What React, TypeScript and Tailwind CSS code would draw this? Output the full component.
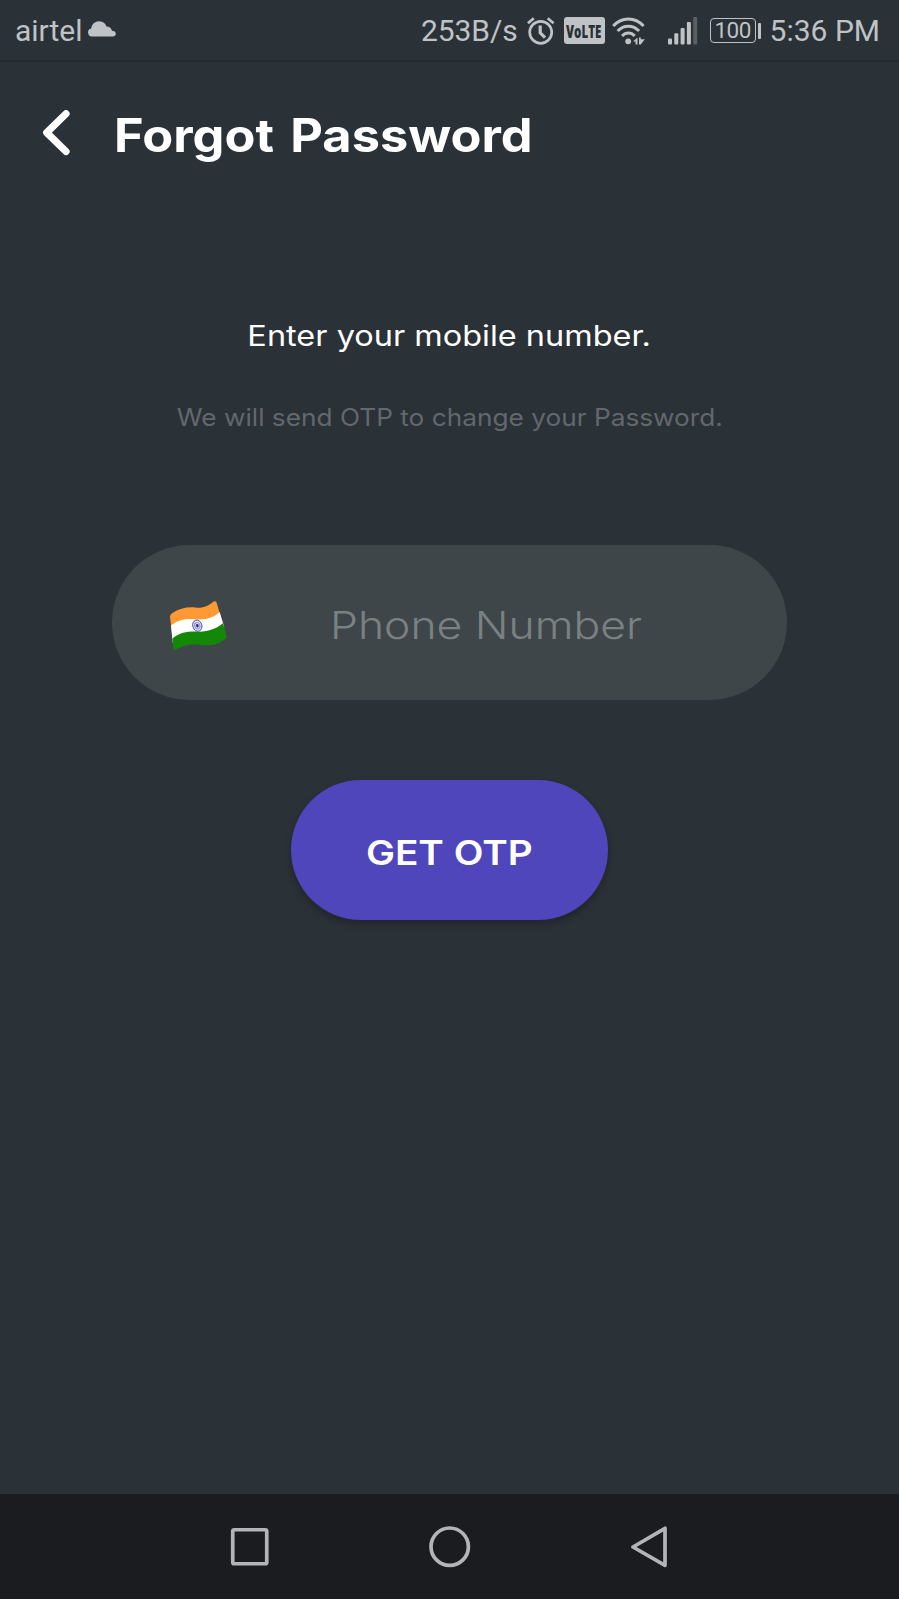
function CloudIcon() {
  return (
    <svg className="mb-[3px] h-4 w-7" viewBox="0 0 28 16" fill="#bfc3c6">
      <path d="M3.800 15.500A4 4 0 0 1 3.200 7.600C3.800 3.200 7 .3 11.200.3c3.700 0 6.300 2.100 7.300 5.300 3.100.1 5 1.700 5.400 4.100 2.500 0 3.900 1.200 3.900 3 0 1.700-1.300 2.800-3.100 2.800z" />
    </svg>
  );
}

function AlarmIcon() {
  return (
    <svg className="h-7 w-7" viewBox="0 0 28 28" fill="none" stroke="#bfc3c6" strokeWidth="2.700">
      <circle cx="13.700" cy="15.300" r="11" />
      <path d="M.9 6.200 6.800 1.200M26.600 6.200 20.700 1.200" />
      <path d="M13.200 8.500v7.300l4.800 4.800" strokeWidth="3.200" />
    </svg>
  );
}

function VolteBadge() {
  return (
    <div className="flex h-[27px] w-[41px] items-center justify-center rounded-[3px] bg-[#bfc3c6]">
      <span className="-mx-3 block scale-x-[0.66] font-['Open_Sans',sans-serif] text-[17.500px] leading-[26px] font-extrabold text-[#2a3136]">
        VoLTE
      </span>
    </div>
  );
}

function WifiIcon() {
  return (
    <svg className="h-7 w-[34px]" viewBox="0 0 34 28" fill="none" stroke="#bfc3c6" strokeWidth="3">
      <path d="M1.200 9C10-.3 22.800-.3 31.600 9" />
      <path d="M5.600 14c6.200-6.500 15.300-6.500 21.500 0" />
      <path d="M10.100 19c3.700-3.900 8.900-3.900 12.600 0" />
      <circle cx="16.200" cy="24.300" r="2.900" fill="#bfc3c6" stroke="none" />
      <path d="M21 24.500 25.500 20.500v7h-2v-3zM27 20.500h1.800v1.800h4L28.800 27.500H27z" fill="#bfc3c6" stroke="none" />
    </svg>
  );
}

function SignalIcon() {
  return (
    <svg className="h-7 w-[30px]" viewBox="0 0 30 28" fill="#bfc3c6">
      <rect x="0" y="21.500" width="4" height="6" rx="1" />
      <rect x="6.300" y="16.300" width="4" height="11.200" rx="1" />
      <rect x="12.600" y="11" width="4" height="16.500" rx="1" />
      <rect x="18.900" y="5" width="4" height="22.500" rx="1" />
      <rect x="25.200" y="0" width="4" height="27.500" rx="1" fill="#596063" />
    </svg>
  );
}

function Battery() {
  return (
    <div className="flex items-center gap-[2px]">
      <div className="flex h-[25px] w-[46px] items-center justify-center rounded-[4px] border-[1.5px] border-[#bfc3c6] pb-[2px] text-[22.500px] leading-[22px] tracking-[-0.5px]">
        100
      </div>
      <div className="h-4 w-[3px] rounded-[1px] bg-[#bfc3c6]" />
    </div>
  );
}

function StatusBar() {
  return (
    <header className="flex h-[62px] items-center justify-between border-b-2 border-[#242a2f] pr-[19px] pl-[15px] pt-[1px] font-['Roboto',sans-serif] text-[30px] leading-[60px] text-[#bfc3c6]">
      <div className="flex items-center gap-[5px]">
        <span>airtel</span>
        <CloudIcon />
      </div>
      <div className="flex items-center">
        <span className="mr-[9px] tracking-[-0.1px]">253B/s</span>
        <AlarmIcon />
        <span className="ml-[9px] flex"><VolteBadge /></span>
        <span className="ml-[7px] flex"><WifiIcon /></span>
        <span className="ml-[22px] flex"><SignalIcon /></span>
        <span className="ml-[12px] flex"><Battery /></span>
        <span className="ml-[9px]">5:36 PM</span>
      </div>
    </header>
  );
}

function IndiaFlag() {
  return (
    <svg className="mt-[5px] h-[70px] w-20" viewBox="0 0 240 210">
      <path d="M33 80Q33 74 39 70C62 54 88 50 112 53C134 55 150 46 163 35Q170 31 173 38L186 84L39 130Z" fill="#ff9933" />
      <path d="M36 106C62 86 88 85 112 88C144 90 164 82 182 66L196 112L41 158Z" fill="#fff" />
      <path d="M40 146C64 125 92 124 116 125C148 126 172 116 192 100L203 138Q204 143 200 146C180 163 154 168 128 165C98 161 72 166 52 178Q44 182 43 175Z" fill="#138808" />
      <g fill="none" stroke="#2b2b9b" transform="rotate(-18 115 107)">
        <ellipse cx="115" cy="107" rx="13.500" ry="17" strokeWidth="2.500" />
        <ellipse cx="115" cy="107" rx="8" ry="10" stroke="#9a9ad6" strokeWidth="4" />
        <ellipse cx="115" cy="107" rx="4" ry="5" fill="#2b2b9b" />
      </g>
    </svg>
  );
}

function NavBar() {
  return (
    <nav className="flex h-[105px] items-center justify-center gap-[158px] bg-[#1a1c1f]">
      <svg className="h-[42px] w-[42px]" viewBox="0 0 42 42" fill="none" stroke="#b4b4b7" strokeWidth="3.700">
        <rect x="3.750" y="3.750" width="34" height="34" rx="1.500" />
      </svg>
      <svg className="h-[42px] w-[42px]" viewBox="0 0 42 42" fill="none" stroke="#b4b4b7" strokeWidth="3.700">
        <circle cx="20.700" cy="20.700" r="18.700" />
      </svg>
      <svg className="h-[42px] w-[42px]" viewBox="0 0 42 42" fill="none" stroke="#b4b4b7" strokeWidth="3.700" strokeLinejoin="round">
        <path d="M36 2.300v37L4 21z" />
      </svg>
    </nav>
  );
}

export default function App() {
  return (
    <div className="flex h-[1599px] w-[899px] flex-col bg-[#2a3137] font-['Inter',sans-serif] text-white">
      <StatusBar />
      <main className="flex flex-1 flex-col items-center">
        <div className="flex w-full items-center pt-[42px] pl-[42px]">
          <svg className="h-[50px] w-[30px]" viewBox="0 0 30 50" fill="none" stroke="#fff" strokeWidth="7.200" strokeLinecap="round" strokeLinejoin="round">
            <path d="M24 3.700 4.700 22.600 24 41.500" />
          </svg>
          <h1 className="ml-[42px] origin-left scale-x-[1.098] text-[46px] leading-[62px] font-bold [word-spacing:4px]">
            Forgot Password
          </h1>
        </div>
        <p className="mt-[150px] scale-x-[1.139] text-[28.500px] leading-[40px]">Enter your mobile number.</p>
        <p className="mt-[42px] scale-x-[1.093] text-[24px] leading-[40px] text-[#62686d]">
          We will send OTP to change your Password.
        </p>
        <div className="mt-[107px] flex h-[155px] w-[675px] items-center rounded-full bg-[#3f4649] pl-[47px]">
          <IndiaFlag />
          <span className="ml-[91px] origin-left scale-x-[1.154] pt-1 text-[38.500px] leading-[50px] font-light text-[#798183]">
            Phone Number
          </span>
        </div>
        <button className="mt-20 h-[140px] w-[317px] rounded-full bg-[#5046bb] pt-[5px] shadow-[0_4px_7px_rgba(0,0,0,0.25)]">
          <span className="inline-block scale-x-[1.122] text-[34.500px] leading-[50px] font-semibold">GET OTP</span>
        </button>
      </main>
      <NavBar />
    </div>
  );
}
